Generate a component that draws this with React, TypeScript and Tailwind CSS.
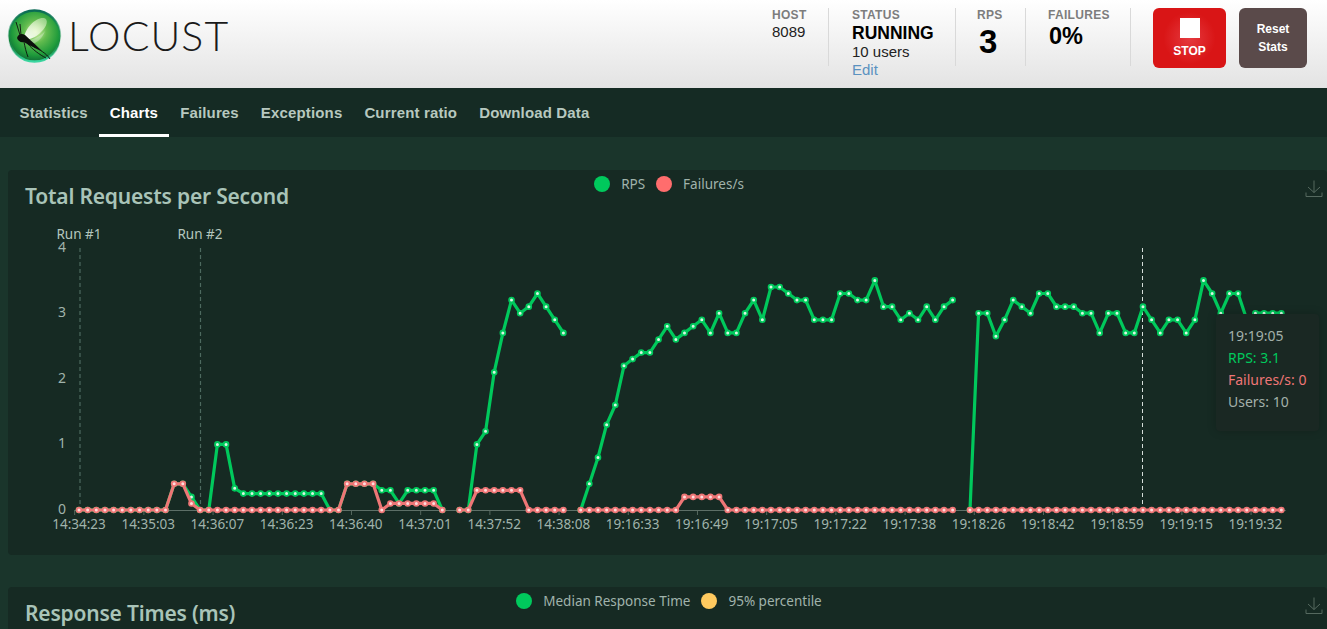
import { Fragment } from "react";

const N = null;
const rps: (number | null)[] = [
  0, 0, 0, 0, 0, 0, 0, 0, 0, 0, 0, 0.4, 0.4, 0.2, 0, 0, 1, 1, 0.33, 0.25,
  0.25, 0.25, 0.25, 0.25, 0.25, 0.25, 0.25, 0.25, 0.25, 0, 0, 0.4, 0.4, 0.4, 0.4, 0.3, 0.3, 0.1, 0.3, 0.3,
  0.3, 0.3, 0, N, 0, 0, 1, 1.2, 2.1, 2.7, 3.2, 3, 3.1, 3.3, 3.1, 2.9, 2.7, N, 0, 0.4,
  0.8, 1.3, 1.6, 2.2, 2.3, 2.4, 2.4, 2.6, 2.8, 2.6, 2.7, 2.8, 2.9, 2.7, 3, 2.7, 2.7, 3, 3.2, 2.9,
  3.4, 3.4, 3.3, 3.2, 3.2, 2.9, 2.9, 2.9, 3.3, 3.3, 3.2, 3.2, 3.5, 3.1, 3.1, 2.9, 3, 2.9, 3.1, 2.9,
  3.1, 3.2, N, 0, 3, 3, 2.65, 2.9, 3.2, 3.1, 3, 3.3, 3.3, 3.1, 3.1, 3.1, 3, 3, 2.7, 3,
  3, 2.7, 2.7, 3.1, 2.9, 2.7, 2.9, 2.9, 2.7, 2.9, 3.5, 3.3, 3, 3.3, 3.3, 2.9, 3, 3, 3, 3,
];

const failures: (number | null)[] = rps.map((v, i) => {
  if (v === null) return null;
  if (i === 11 || i === 12 || (i >= 31 && i <= 34)) return 0.4;
  if (i === 13 || (i >= 36 && i <= 41)) return 0.1;
  if (i >= 46 && i <= 51) return 0.3;
  if (i >= 70 && i <= 74) return 0.2;
  return 0;
});

const xLabels = [
  "14:34:23", "14:35:03", "14:36:07", "14:36:23", "14:36:40", "14:37:01",
  "14:37:52", "14:38:08", "19:16:33", "19:16:49", "19:17:05", "19:17:22",
  "19:17:38", "19:18:26", "19:18:42", "19:18:59", "19:19:15", "19:19:32",
];

const px = (i: number) => 79 + i * 8.65;
const py = (v: number) => 510 - v * 65.6;

function linePath(data: (number | null)[]) {
  let d = "";
  let pen = false;
  data.forEach((v, i) => {
    if (v === null) {
      pen = false;
      return;
    }
    d += `${pen ? "L" : "M"}${px(i).toFixed(1)} ${py(v).toFixed(1)}`;
    pen = true;
  });
  return d;
}

function Series({ data, color, dot }: { data: (number | null)[]; color: string; dot: string }) {
  return (
    <g>
      <path d={linePath(data)} fill="none" stroke={color} strokeWidth={3.2} strokeLinejoin="round" />
      {data.map((v, i) =>
        v === null ? null : (
          <circle key={i} cx={px(i)} cy={py(v)} r={2.4} fill={dot} stroke={color} strokeWidth={1.8} />
        ),
      )}
    </g>
  );
}

function RpsChart() {
  return (
    <svg viewBox="8 222 1319 333" className="block h-[333px] w-[1319px]">
      <g className="font-['Noto_Sans',sans-serif]" fontSize={13.5} fill="#a0b3ab">
        {[0, 1, 2, 3, 4].map((t) => (
          <text key={t} x={62} y={py(t) + 4} textAnchor="middle" fontSize={14}>
            {t}
          </text>
        ))}
        {xLabels.map((label, k) => (
          <Fragment key={label}>
            <line x1={px(k * 8 - 0.5)} x2={px(k * 8 - 0.5)} y1={510} y2={515} stroke="#56685f" />
            <text x={px(k * 8)} y={529} textAnchor="middle">
              {label}
            </text>
          </Fragment>
        ))}
        <text x={79} y={239} textAnchor="middle" fill="#b4c6be">Run #1</text>
        <text x={200} y={239} textAnchor="middle" fill="#b4c6be">Run #2</text>
      </g>
      <line x1={px(-0.5)} x2={px(139.5)} y1={510.5} y2={510.5} stroke="#5d6f67" />
      <line x1={80} x2={80} y1={248} y2={510} stroke="#4d6a5f" strokeWidth={1.2} strokeDasharray="4 3" />
      <line x1={200.5} x2={200.5} y1={248} y2={510} stroke="#4d6a5f" strokeWidth={1.2} strokeDasharray="4 3" />
      <line x1={1142.5} x2={1142.5} y1={248} y2={510} stroke="#d5ddd9" strokeDasharray="4 3" />
      <Series data={rps} color="#00c95c" dot="#d9f7e4" />
      <Series data={failures} color="#ee7676" dot="#ffdcdc" />
    </svg>
  );
}

function DownloadIcon() {
  return (
    <svg viewBox="0 0 18 18" className="h-[18px] w-[18px]" fill="none" stroke="#55695f" strokeWidth={1}>
      <path d="M9 0.5V12.5M3 7l6 5.5L15 7M1 12.5v4h16v-4" />
    </svg>
  );
}

function LegendDot({ color, label }: { color: string; label: string }) {
  return (
    <span className="flex h-4 items-center">
      <span className={`h-4 w-4 rounded-full ${color}`} />
      <span className="mx-[11px] text-[13.5px] leading-4 text-[#a0b3ab]">{label}</span>
    </span>
  );
}

function CardHeader({ title, children }: { title: string; children: React.ReactNode }) {
  return (
    <div className="grid h-[52px] grid-cols-[1fr_auto_1fr] items-start font-['Noto_Sans',sans-serif]">
      <h2 className="pl-[17px] pt-[11px] text-[21px] leading-[30px] font-semibold tracking-[-0.2px] text-[#a9c4b8]">
        {title}
      </h2>
      <div className="flex pt-[6px] pl-[14px]">{children}</div>
      <div className="flex justify-end pt-[10px] pr-[4px]">
        <DownloadIcon />
      </div>
    </div>
  );
}

function Logo() {
  return (
    <svg viewBox="0 0 70 72" className="h-[72px] w-[70px]">
      <defs>
        <radialGradient id="ball" cx="0.52" cy="0.42" r="0.62">
          <stop offset="0" stopColor="#d7f2a6" />
          <stop offset="0.35" stopColor="#62bb4e" />
          <stop offset="0.72" stopColor="#1f9b3b" />
          <stop offset="1" stopColor="#0a5c34" />
        </radialGradient>
        <linearGradient id="rim" x1="0" y1="0" x2="0" y2="1">
          <stop offset="0" stopColor="#0a6a55" />
          <stop offset="0.6" stopColor="#19a45f" stopOpacity="0.1" />
          <stop offset="1" stopColor="#3ad6a0" />
        </linearGradient>
        <linearGradient id="wing" x1="0" y1="1" x2="1" y2="0">
          <stop offset="0" stopColor="#ffffff" />
          <stop offset="1" stopColor="#e2f5c8" stopOpacity="0.45" />
        </linearGradient>
      </defs>
      <circle cx="34.5" cy="36" r="26" fill="url(#ball)" />
      <circle cx="34.5" cy="36" r="25.5" fill="none" stroke="url(#rim)" strokeWidth="2.5" />
      <path d="M24 38C25 28 36 17 44 18C49 19 47 27 41 32C36 37 29 41 24 38Z" fill="url(#wing)" />
      <path d="M24 40C31 41 40 37 45 31C42 40 33 46 27 44Z" fill="#ffffff" fillOpacity="0.3" />
      <path d="M17 38C18 34 22 33 25 35C29 39 36 45 42 51C35 48 28 45 24 42C21 43 18 41 17 38Z" fill="#0c0f0c" />
      <g fill="none" stroke="#0c0f0c" strokeWidth="0.9">
        <path d="M20 35L16 22M21 35L20 24M24 42C25 47 26 52 28 57M28 44C32 49 40 55 46 58M34 47C40 50 46 53 50 59" />
      </g>
    </svg>
  );
}

function Stat({ label, children, className }: { label: string; children: React.ReactNode; className: string }) {
  return (
    <div className={`h-[58px] border-r border-[#d9d9d9] ${className}`}>
      <div className="text-[12px] leading-[14px] font-bold tracking-[0.3px] text-[#7d7d7d]">{label}</div>
      {children}
    </div>
  );
}

export default function App() {
  const tabs = ["Statistics", "Charts", "Failures", "Exceptions", "Current ratio", "Download Data"];

  return (
    <div className="h-screen w-full overflow-hidden bg-[#1a352b] font-['Liberation_Sans',Arial,sans-serif]">
      <header className="flex h-[88px] items-start bg-gradient-to-b from-[#ffffff] to-[#e3e3e3]">
        <div className="flex items-center">
          <Logo />
          <span className="-ml-[2px] font-['Lato',sans-serif] text-[41px] leading-[72px] font-light tracking-[1.1px] text-[#1a1a1a]">
            LOCUST
          </span>
        </div>
        <div className="ml-auto flex items-start pt-2 pr-5">
          <Stat label="HOST" className="w-[57px]">
            <div className="mt-[1px] text-[15px] leading-[17px] text-[#222]">8089</div>
          </Stat>
          <Stat label="STATUS" className="w-[127px] pl-[23px]">
            <div className="mt-[1px] text-[17.5px] leading-[20px] font-bold text-black">RUNNING</div>
            <div className="text-[15px] leading-[18px] text-[#222]">10 users</div>
            <div className="text-[15px] leading-[18px] text-[#5b92c0]">Edit</div>
          </Stat>
          <Stat label="RPS" className="w-[70px] pl-[21px]">
            <div className="mt-[1px] ml-[2px] text-[33px] leading-[38px] font-bold text-black">3</div>
          </Stat>
          <Stat label="FAILURES" className="w-[105px] pl-[22px]">
            <div className="mt-[1px] ml-[1px] text-[23.5px] leading-[26px] font-bold text-black">0%</div>
          </Stat>
          <button className="ml-[22px] flex h-[60px] w-[73px] flex-col items-center rounded-[6px] bg-[radial-gradient(circle,#e53a3f_0%,#d91516_55%)] pt-[10px] text-white">
            <span className="h-5 w-5 bg-white" />
            <span className="mt-[6px] text-[12px] leading-[14px] font-bold">STOP</span>
          </button>
          <button className="ml-[13px] h-[60px] w-[68px] rounded-[6px] bg-[#5a4a4a] text-[12px] leading-[18px] font-bold text-white">
            Reset
            <br />
            Stats
          </button>
        </div>
      </header>

      <nav className="flex h-[49px] bg-[#152b24] pl-[8.5px]">
        {tabs.map((tab) => (
          <a
            key={tab}
            className={`h-[49px] px-[11px] pt-[15px] text-[15px] leading-[19px] font-bold tracking-[0.15px] ${
              tab === "Charts" ? "border-b-[3px] border-white text-white" : "text-[#b7c8bf]"
            }`}
          >
            {tab}
          </a>
        ))}
      </nav>

      <main className="flex flex-col gap-8 pt-[33px] pl-2">
        <section className="relative h-[385px] rounded-[4px] bg-[#162a23]">
          <CardHeader title="Total Requests per Second">
            <LegendDot color="bg-[#00c95c]" label="RPS" />
            <LegendDot color="bg-[#ff6d6d]" label="Failures/s" />
          </CardHeader>
          <RpsChart />
          <div className="absolute top-[144px] left-[1208px] h-[117px] w-[103px] rounded-[4px] bg-[#1a2823] pt-[11px] pl-[12px] font-['Noto_Sans',sans-serif] text-[14px] leading-[22px] text-[#a3b0aa] shadow-[0_0_10px_rgba(0,0,0,0.2)]">
            <div>19:19:05</div>
            <div className="text-[#00c95c]">RPS: 3.1</div>
            <div className="whitespace-nowrap text-[#ee7676]">Failures/s: 0</div>
            <div>Users: 10</div>
          </div>
        </section>
        <section className="h-[385px] rounded-[4px] bg-[#162a23]">
          <CardHeader title="Response Times (ms)">
            <LegendDot color="bg-[#00c95c]" label="Median Response Time" />
            <LegendDot color="bg-[#ffca5f]" label="95% percentile" />
          </CardHeader>
        </section>
      </main>
    </div>
  );
}
